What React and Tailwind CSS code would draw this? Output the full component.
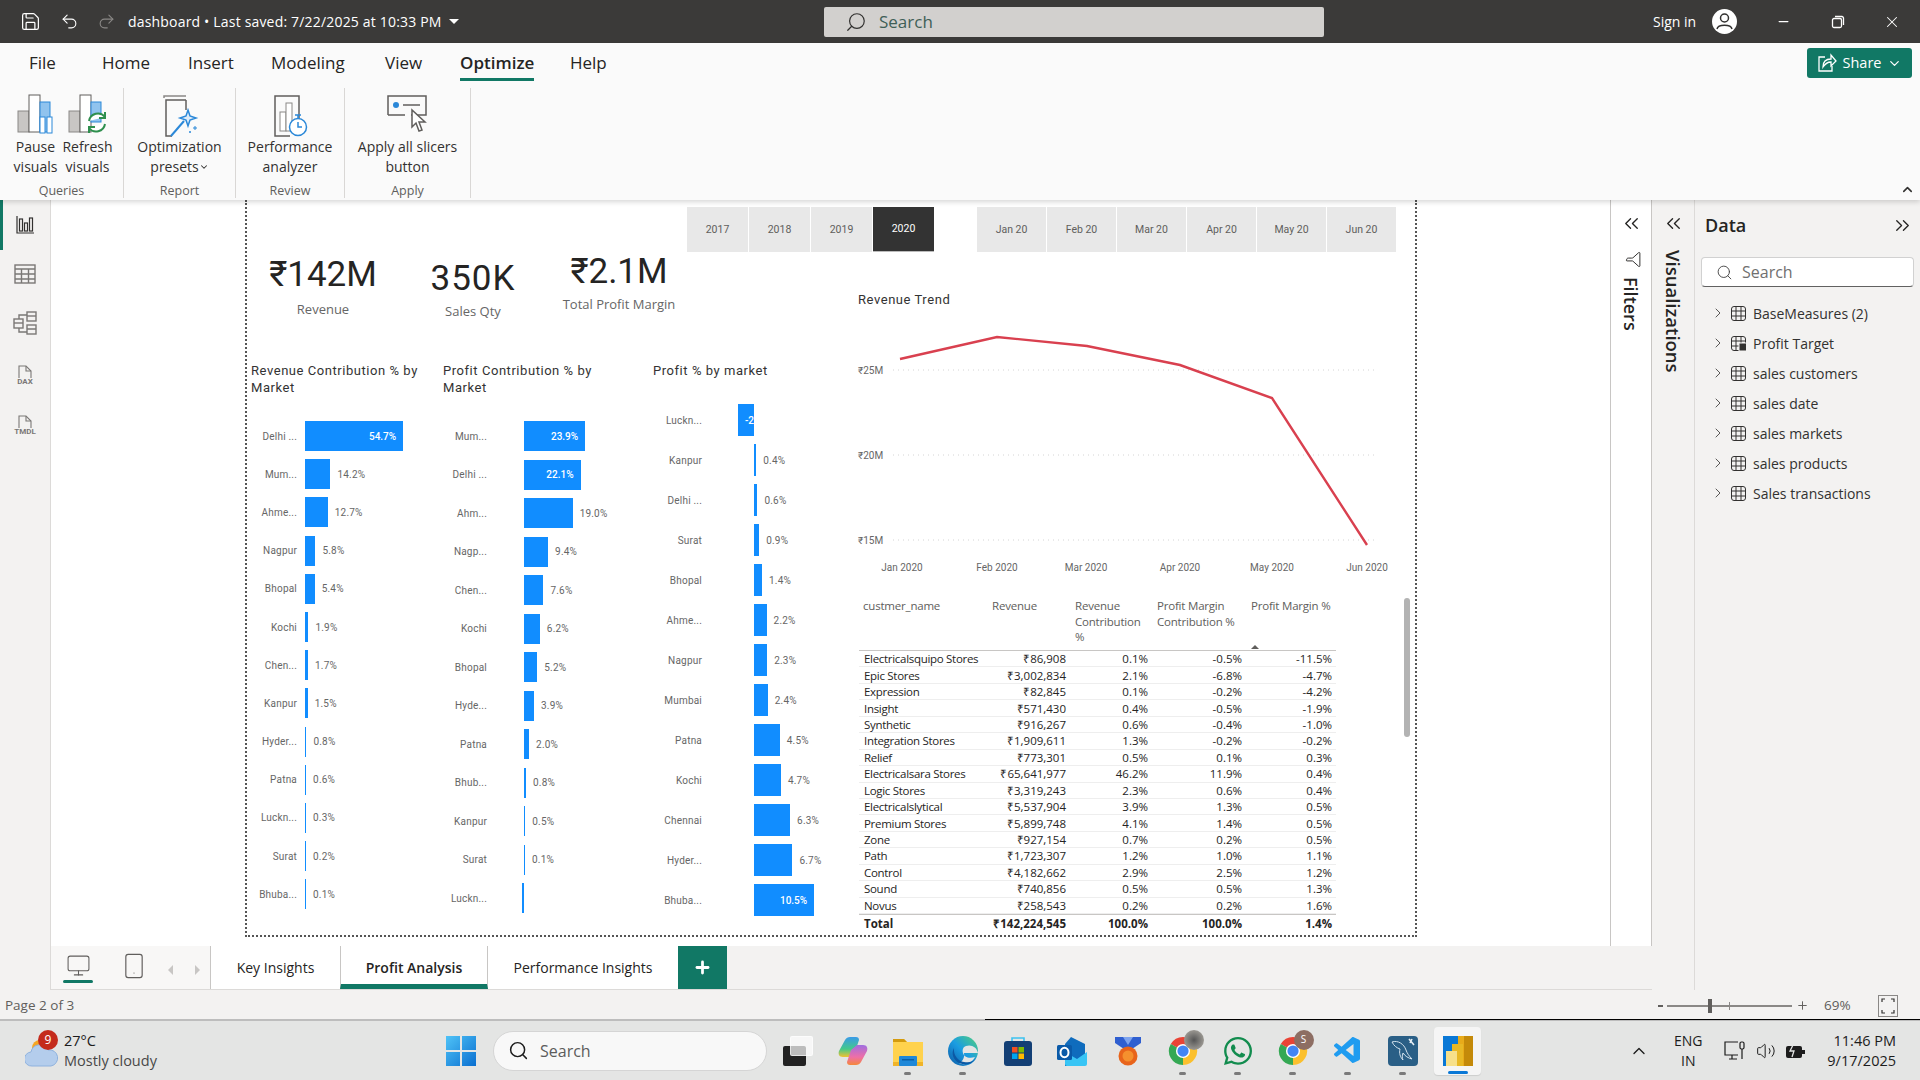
import React from "react";
import { Save, Undo2, Redo2, Search, Minus, X, ChevronDown, ChevronUp, ChevronRight, ChevronsLeft, ChevronsRight, Filter, Monitor, Smartphone, Plus, Volume2 } from "lucide-react";
import { FaWhatsapp } from "react-icons/fa";
import { VscVscode } from "react-icons/vsc";

const UI = "font-['Open_Sans',sans-serif]";
const DIN = "font-['Roboto',sans-serif]";

const revenueContribution = [
  ["Delhi ...", 54.7], ["Mum...", 14.2], ["Ahme...", 12.7], ["Nagpur", 5.8], ["Bhopal", 5.4], ["Kochi", 1.9], ["Chen...", 1.7],
  ["Kanpur", 1.5], ["Hyder...", 0.8], ["Patna", 0.6], ["Luckn...", 0.3], ["Surat", 0.2], ["Bhuba...", 0.1],
];
const profitContribution = [
  ["Mum...", 23.9], ["Delhi ...", 22.1], ["Ahm...", 19.0], ["Nagp...", 9.4], ["Chen...", 7.6], ["Kochi", 6.2], ["Bhopal", 5.2],
  ["Hyde...", 3.9], ["Patna", 2.0], ["Bhub...", 0.8], ["Kanpur", 0.5], ["Surat", 0.1], ["Luckn...", -0.6],
];
const profitByMarket = [
  ["Luckn...", -2.8], ["Kanpur", 0.4], ["Delhi ...", 0.6], ["Surat", 0.9], ["Bhopal", 1.4], ["Ahme...", 2.2], ["Nagpur", 2.3],
  ["Mumbai", 2.4], ["Patna", 4.5], ["Kochi", 4.7], ["Chennai", 6.3], ["Hyder...", 6.7], ["Bhuba...", 10.5],
];

const customers = [
  ["Electricalsquipo Stores", "₹86,908", "0.1%", "-0.5%", "-11.5%"],
  ["Epic Stores", "₹3,002,834", "2.1%", "-6.8%", "-4.7%"],
  ["Expression", "₹82,845", "0.1%", "-0.2%", "-4.2%"],
  ["Insight", "₹571,430", "0.4%", "-0.5%", "-1.9%"],
  ["Synthetic", "₹916,267", "0.6%", "-0.4%", "-1.0%"],
  ["Integration Stores", "₹1,909,611", "1.3%", "-0.2%", "-0.2%"],
  ["Relief", "₹773,301", "0.5%", "0.1%", "0.3%"],
  ["Electricalsara Stores", "₹65,641,977", "46.2%", "11.9%", "0.4%"],
  ["Logic Stores", "₹3,319,243", "2.3%", "0.6%", "0.4%"],
  ["Electricalslytical", "₹5,537,904", "3.9%", "1.3%", "0.5%"],
  ["Premium Stores", "₹5,899,748", "4.1%", "1.4%", "0.5%"],
  ["Zone", "₹927,154", "0.7%", "0.2%", "0.5%"],
  ["Path", "₹1,723,307", "1.2%", "1.0%", "1.1%"],
  ["Control", "₹4,182,662", "2.9%", "2.5%", "1.2%"],
  ["Sound", "₹740,856", "0.5%", "0.5%", "1.3%"],
  ["Novus", "₹258,543", "0.2%", "0.2%", "1.6%"],
];

const tables = ["BaseMeasures (2)", "Profit Target", "sales customers", "sales date", "sales markets", "sales products", "Sales transactions"];

const PauseIcon = () => (
  <svg width="40" height="40" viewBox="0 0 40 40" fill="none">
    <rect x="2" y="17" width="11" height="21" fill="#c8c6c4" stroke="#8a8886" />
    <rect x="13" y="1" width="11" height="37" fill="#fff" stroke="#605e5c" />
    <rect x="24" y="8" width="10" height="30" fill="#90c3ee" stroke="#2b88d8" />
    <rect x="24" y="23" width="5" height="16" fill="#fff" stroke="#2b88d8" />
    <rect x="31" y="23" width="5" height="16" fill="#fff" stroke="#2b88d8" />
  </svg>
);

const RefreshIcon = () => (
  <svg width="40" height="40" viewBox="0 0 40 40" fill="none">
    <rect x="1" y="17" width="11" height="21" fill="#c8c6c4" stroke="#8a8886" />
    <rect x="12" y="1" width="11" height="37" fill="#fff" stroke="#605e5c" />
    <rect x="23" y="8" width="10" height="20" fill="#90c3ee" stroke="#2b88d8" />
    <path d="M21 27a9 9 0 0 1 16-4M37 30a9 9 0 0 1-16 4" stroke="#2f8f4e" strokeWidth="2" fill="#fff" />
    <path d="M37 18v6h-6M21 39v-6h6" stroke="#2f8f4e" strokeWidth="2" />
  </svg>
);

const WandIcon = () => (
  <svg width="40" height="44" viewBox="0 0 40 44" fill="none">
    <path d="M27 2H5v2" stroke="#8a8886" strokeWidth="1.5" />
    <path d="M27 6H7v36h6" stroke="#605e5c" strokeWidth="1.5" />
    <path d="M27 6v10" stroke="#605e5c" strokeWidth="1.5" />
    <path d="M12 42l13-15" stroke="#2b88d8" strokeWidth="2" />
    <path d="M29 16l2 6 6 2-6 2-2 6-2-6-6-2 6-2z" fill="#deecf9" stroke="#2b88d8" strokeWidth="1.5" />
    <path d="M36 32v4M34 34h4M31 37v2M30 38h2" stroke="#2b88d8" />
  </svg>
);

const PerfIcon = () => (
  <svg width="40" height="44" viewBox="0 0 40 44" fill="none">
    <path d="M29 26V2H5v40h15" stroke="#605e5c" strokeWidth="1.5" />
    <rect x="10" y="18" width="6" height="19" fill="#fff" stroke="#8a8886" />
    <rect x="16" y="9" width="6" height="28" fill="#fff" stroke="#8a8886" />
    <circle cx="28" cy="33" r="8.5" fill="#fff" stroke="#2b88d8" strokeWidth="1.5" />
    <path d="M28 28v5h4M25 21h6M28 21v3" stroke="#2b88d8" strokeWidth="1.5" />
  </svg>
);

const SlicerIcon = () => (
  <svg width="42" height="44" viewBox="0 0 42 44" fill="none">
    <path d="M2 21V2h38v19H25M2 21h17" stroke="#605e5c" strokeWidth="1.5" />
    <circle cx="10" cy="11" r="3" fill="#2b88d8" />
    <path d="M17 11h17" stroke="#605e5c" strokeWidth="1.5" />
    <path d="M26 16v17l4-4 3 8 3-1-3-8h6z" fill="#fff" stroke="#605e5c" strokeWidth="1.5" />
  </svg>
);

const ShareIcon = () => (
  <svg width="20" height="20" viewBox="0 0 20 20" fill="none" stroke="#fff" strokeWidth="1.3">
    <path d="M8 4H2v14h13v-5" />
    <path d="M6 14c0-5 3-8 8-8V2l5 6-5 5V9c-4 0-6 2-8 5z" />
  </svg>
);

const RibbonButton = ({ icon, lines, caret, width = "" }) => (
  <div className={`flex flex-col items-center ${width}`}>
    <div className="flex h-[43px] items-start justify-center">{icon}</div>
    <div className="text-center text-[14px] leading-[20px] text-[#323130]">
      {lines.map((l, i) => (
        <div key={l} className="flex items-center justify-center whitespace-nowrap">
          {l}
          {caret && i === 1 && <ChevronDown size={10} strokeWidth={2.5} />}
        </div>
      ))}
    </div>
  </div>
);

const RibbonGroup = ({ width, label, children }) => (
  <div className={`flex h-[110px] flex-col border-r border-[#d9d7d5] ${width}`}>
    <div className="flex h-[95px] justify-center pt-[6px]">{children}</div>
    <div className="text-center text-[12.5px] leading-[15px] text-[#605e5c]">{label}</div>
  </div>
);

const ribbonTabs = [
  ["File", "w-[73px]"], ["Home", "w-[86px]"], ["Insert", "w-[83px]"], ["Modeling", "w-[114px]"], ["View", "w-[75px]"], ["Optimize", "w-[110px]"], ["Help", "w-[60px]"],
];

const TitleBar = () => (
  <div className="flex h-[43px] items-center bg-[#3b3a39] text-white">
    <Save size={21} strokeWidth={1.4} className="ml-[20px]" />
    <Undo2 size={19} strokeWidth={1.4} className="ml-[19px]" />
    <Redo2 size={19} strokeWidth={1.4} className="ml-[18px] text-[#8a8886]" />
    <div className="ml-[12px] w-[314px] whitespace-nowrap text-[14px] tracking-[0.18px]">dashboard • Last saved: 7/22/2025 at 10:33 PM</div>
    <div className="ml-[7px] h-0 w-0 border-x-[5px] border-t-[5px] border-x-transparent border-t-white" />
    <div className="ml-[365px] flex h-[30px] w-[500px] items-center rounded-[2px] bg-[#d2d0ce] pl-[21px] text-[17px] text-[#3f5f57]">
      <Search size={22} strokeWidth={1.3} className="-scale-x-100 text-[#323130]" />
      <span className="ml-[12px]">Search</span>
    </div>
    <div className="ml-[329px] text-[14px]">Sign in</div>
    <svg width="27" height="27" viewBox="0 0 27 27" className="ml-[15px]">
      <circle cx="13.5" cy="13.5" r="12.5" fill="#fff" />
      <circle cx="13.5" cy="10" r="4" fill="none" stroke="#323130" strokeWidth="1.5" />
      <path d="M6 21c1-5 14-5 15 0" fill="none" stroke="#323130" strokeWidth="1.5" />
    </svg>
    <Minus size={15} className="ml-[38px]" />
    <svg width="14" height="14" viewBox="0 0 14 14" fill="none" stroke="#fff" strokeWidth="1.3" className="ml-[40px]">
      <rect x="1.5" y="3.5" width="9" height="9" rx="1.5" />
      <path d="M4 1.5h7a2 2 0 0 1 1.5 1.5v7" />
    </svg>
    <X size={18} strokeWidth={1.4} className="ml-[38px]" />
  </div>
);

const Ribbon = () => (
  <div className="relative z-10 h-[157px] bg-[#fafafa] shadow-[0_2px_5px_rgba(0,0,0,0.16)]">
    <div className="flex h-[38px] pl-[29px] text-[17px] text-[#252423]">
      {ribbonTabs.map(([t, w]) => (
        <div key={t} className={w}>
          <div className="flex w-fit flex-col">
            <div className={`mt-[8px] leading-[24px] ${t === "Optimize" ? "font-semibold" : ""}`}>{t}</div>
            {t === "Optimize" && <div className="mt-[3px] h-[3px] bg-[#117865]" />}
          </div>
        </div>
      ))}
    </div>
    <div className="mt-[7px] flex">
      <RibbonGroup width="w-[124px]" label="Queries">
        <RibbonButton icon={<PauseIcon />} lines={["Pause", "visuals"]} width="w-[52px]" />
        <RibbonButton icon={<RefreshIcon />} lines={["Refresh", "visuals"]} width="w-[52px]" />
      </RibbonGroup>
      <RibbonGroup width="w-[112px]" label="Report">
        <RibbonButton icon={<WandIcon />} lines={["Optimization", "presets"]} caret />
      </RibbonGroup>
      <RibbonGroup width="w-[109px]" label="Review">
        <RibbonButton icon={<PerfIcon />} lines={["Performance", "analyzer"]} />
      </RibbonGroup>
      <RibbonGroup width="w-[126px]" label="Apply">
        <RibbonButton icon={<SlicerIcon />} lines={["Apply all slicers", "button"]} />
      </RibbonGroup>
    </div>
    <div className="absolute right-[8px] top-[5px] flex h-[30px] w-[105px] items-center justify-center gap-[6px] rounded-[3px] bg-[#117865] text-[14.5px] text-white">
      <ShareIcon />
      <span>Share</span>
      <ChevronDown size={15} />
    </div>
    <ChevronUp size={15} strokeWidth={2.5} className="absolute bottom-[3px] right-[5px] text-[#323130]" />
  </div>
);

const ReportRail = () => (
  <svg width="18" height="18" viewBox="0 0 18 18" fill="none" stroke="#323130" strokeWidth="1.2">
    <path d="M1 0v17h17" />
    <rect x="3.5" y="3" width="3" height="12" />
    <rect x="8.5" y="7" width="3" height="8" />
    <rect x="13.5" y="2" width="3" height="13" />
  </svg>
);
const TableRail = () => (
  <svg width="22" height="20" viewBox="0 0 22 20" fill="none" stroke="#7a7876" strokeWidth="1.4">
    <rect x="1" y="1" width="20" height="18" />
    <path d="M1 5h20M1 10h20M1 15h20M7.5 5v14M14.5 5v14" />
  </svg>
);
const ModelRail = () => (
  <svg width="24" height="24" viewBox="0 0 24 24" fill="none" stroke="#7a7876" strokeWidth="1.4">
    <rect x="1" y="8" width="9" height="9" />
    <path d="M1 12h9" />
    <rect x="14" y="1" width="9" height="9" />
    <path d="M14 5h9" />
    <rect x="14" y="14" width="9" height="9" />
    <path d="M14 18h9M6 8V4h8M6 17v4h8" />
  </svg>
);
const DocRail = ({ label, size }) => (
  <svg width="26" height="22" viewBox="0 0 26 22" fill="none" className="mt-[4px]">
    <path d="M7 14V2h7l5 5v7" stroke="#7a7876" strokeWidth="1.1" />
    <path d="M14 2v5h5" stroke="#7a7876" strokeWidth="1.1" />
    <text x="13" y="20" textAnchor="middle" fontSize={size} fontWeight="700" fill="#7a7876" fontFamily="Roboto, sans-serif">{label}</text>
  </svg>
);

const railSlots = [
  ["h-[50px]", <ReportRail />, true],
  ["h-[48px]", <TableRail />, false],
  ["h-[50px]", <ModelRail />, false],
  ["h-[50px]", <DocRail label="DAX" size="8" />, false],
  ["h-[50px]", <DocRail label="TMDL" size="8" />, false],
];

const LeftRail = () => (
  <div className="w-[51px] shrink-0 border-r border-[#dcdad8] bg-[#f3f2f1]">
    {railSlots.map(([h, icon, active], i) => (
      <div key={i} className={`flex items-center justify-center ${h} ${active ? "border-l-[3px] border-[#117865] pr-[3px]" : ""}`}>
        {icon}
      </div>
    ))}
  </div>
);

const Slicer = ({ label, active, width }) => (
  <div className={`flex h-[45px] items-center justify-center text-[10.5px] ${width} ${active ? "border-b border-[#bbb] bg-[#333333] text-white" : "bg-[#e8e8e8] text-[#605e5c]"} ${DIN}`}>
    {label}
  </div>
);

const Kpi = ({ value, label, width, top, gap, spacing }) => (
  <div className={`flex flex-col items-center ${width} ${top}`}>
    <div className={`text-[35px] leading-[38px] text-[#252423] ${spacing} ${DIN}`}>{value}</div>
    <div className={`text-[13px] leading-[20px] text-[#666666] ${gap}`}>{label}</div>
  </div>
);

const BarChart = ({ title, rows, width, titlePad, rowsGap, labelW, gapW, scale, pitch, barH, insideFrom }) => (
  <div className={`${width} pt-[2px]`}>
    <div className={`h-[34px] text-[13px] leading-[17px] tracking-[0.55px] text-[#333333] ${titlePad} ${DIN}`}>{title}</div>
    <div className={rowsGap}>
      {rows.map(([name, v]) => {
        const w = Math.max(Math.abs(v) * scale, 1);
        const inside = v >= insideFrom;
        return (
          <div key={name} className={`flex items-center ${pitch} text-[10px] text-[#666666] ${DIN}`}>
            <div className={`shrink-0 whitespace-nowrap text-right tracking-[0.2px] ${labelW}`}>{name}</div>
            <div className={`flex shrink-0 justify-end ${gapW}`}>
              {v < 0 && (
                <div className={`flex items-center overflow-hidden whitespace-nowrap bg-[#118dff] font-medium text-white ${barH} ${w > 10 ? "pl-[7px]" : ""}`} style={{ width: w }}>
                  {w > 10 && `${v}%`}
                </div>
              )}
            </div>
            {v > 0 && (
              <div className={`flex shrink-0 items-center justify-end bg-[#118dff] font-medium text-white ${barH} ${inside ? "pr-[7px]" : ""}`} style={{ width: w }}>
                {inside && `${v.toFixed(1)}%`}
              </div>
            )}
            {v > 0 && !inside && <div className="ml-[7px] tracking-[0.2px]">{v.toFixed(1)}%</div>}
          </div>
        );
      })}
    </div>
  </div>
);

const linePoints = "50,49 147,27 237,36 330,55 422,88 517,235";
const xTicks = [["Jan 2020", 52], ["Feb 2020", 147], ["Mar 2020", 236], ["Apr 2020", 330], ["May 2020", 422], ["Jun 2020", 517]];
const yTicks = [["₹25M", 60], ["₹20M", 145], ["₹15M", 230]];

const TrendChart = () => (
  <svg width="560" height="270" viewBox="0 0 560 270" fontFamily="Roboto, sans-serif" fontSize="10" fill="#666666">
    {yTicks.map(([t, y]) => (
      <g key={t}>
        <text x="8" y={y + 3.5}>{t}</text>
        <line x1="43" x2="525" y1={y} y2={y} stroke="#d4d4d4" strokeDasharray="1 4" />
      </g>
    ))}
    {xTicks.map(([t, x]) => (
      <text key={t} x={x} y="261" textAnchor="middle">{t}</text>
    ))}
    <polyline points={linePoints} fill="none" stroke="#d9404f" strokeWidth="2.4" />
  </svg>
);

const tableCols = "grid grid-cols-[126px_85px_82px_94px_90px]";

const CustomerTable = () => (
  <div className="relative ml-[9px] mt-[18px] w-[551px] text-[11.5px] text-[#252423]">
    <div className={`${tableCols} h-[53px] w-[477px] border-b border-[#c8c6c4] leading-[15.5px] tracking-[-0.2px] text-[#605e5c]`}>
      <div className="pl-[4px]">custmer_name</div>
      <div className="pl-[7px]">Revenue</div>
      <div className="pl-[5px]">Revenue Contribution %</div>
      <div className="pl-[5px]">Profit Margin Contribution %</div>
      <div className="relative whitespace-nowrap pl-[5px]">
        Profit Margin %
        <div className="absolute bottom-[1px] left-[5px] h-0 w-0 border-x-[4px] border-b-[4px] border-x-transparent border-b-[#605e5c]" />
      </div>
    </div>
    {customers.map((row) => (
      <div key={row[0]} className={`${tableCols} h-[16.45px] w-[477px] items-center border-b border-[#eeeeee] leading-[15px]`}>
        <div className="whitespace-nowrap pl-[5px] tracking-[-0.3px]">{row[0]}</div>
        {row.slice(1).map((c, i) => (
          <div key={i} className="pr-[4px] text-right">{c}</div>
        ))}
      </div>
    ))}
    <div className={`${tableCols} h-[19px] w-[477px] items-center border-t border-[#c8c6c4] font-bold`}>
      <div className="pl-[5px]">Total</div>
      <div className="pr-[4px] text-right">₹142,224,545</div>
      <div className="pr-[4px] text-right">100.0%</div>
      <div className="pr-[4px] text-right">100.0%</div>
      <div className="pr-[4px] text-right">1.4%</div>
    </div>
    <div className="absolute left-[545px] top-0 h-[139px] w-[6px] rounded-full bg-[#b3b3b3]" />
  </div>
);

const Report = () => (
  <div className={`ml-[194px] h-[737px] w-[1172px] border-x-2 border-b-2 border-dotted border-[#555555] ${UI}`}>
    <div className="flex h-[52px] pl-[440px] pt-[7px]">
      <div className="flex gap-px">
        {["2017", "2018", "2019", "2020"].map((y) => (
          <Slicer key={y} label={y} width="w-[61px]" active={y === "2020"} />
        ))}
      </div>
      <div className="ml-[43px] flex gap-px">
        {["Jan 20", "Feb 20", "Mar 20", "Apr 20", "May 20", "Jun 20"].map((m) => (
          <Slicer key={m} label={m} width="w-[69px]" />
        ))}
      </div>
    </div>
    <div className="-mt-px flex">
      <div className="w-[603px] shrink-0">
        <div className="flex h-[109px]">
          <Kpi value="₹142M" label="Revenue" width="w-[152px]" top="pt-[5px]" gap="mt-[5px]" spacing="tracking-[0px]" />
          <Kpi value="350K" label="Sales Qty" width="w-[148px]" top="pt-[9px]" gap="mt-[3px]" spacing="tracking-[1px]" />
          <Kpi value="₹2.1M" label="Total Profit Margin" width="w-[144px]" top="pt-[2px]" gap="mt-[3px]" spacing="tracking-[0px]" />
        </div>
        <div className="flex">
          <BarChart title="Revenue Contribution % by Market" rows={revenueContribution} width="w-[190px]" titlePad="pl-[4px]" rowsGap="mt-[21px]" labelW="w-[50px]" gapW="w-[8px]" scale={1.795} pitch="h-[38.2px]" barH="h-[30px]" insideFrom={50} />
          <BarChart title="Profit Contribution % by Market" rows={profitContribution} width="w-[210px]" titlePad="pl-[6px] pr-[20px]" rowsGap="mt-[21px]" labelW="w-[50px]" gapW="w-[37px]" scale={2.56} pitch="h-[38.5px]" barH="h-[30px]" insideFrom={20} />
          <BarChart title="Profit % by market" rows={profitByMarket} width="w-[203px]" titlePad="pl-[6px]" rowsGap="mt-[4px]" labelW="w-[55px]" gapW="w-[52px]" scale={5.73} pitch="h-[40px]" barH="h-[32px]" insideFrom={10} />
        </div>
      </div>
      <div className="flex-1">
        <div className={`ml-[8px] mt-[40px] h-[19px] text-[13px] leading-[17px] tracking-[0.55px] text-[#333333] ${DIN}`}>Revenue Trend</div>
        <TrendChart />
        <CustomerTable />
      </div>
    </div>
  </div>
);

const FiltersPane = () => (
  <div className="flex w-[42px] shrink-0 flex-col items-center border-x border-[#c8c6c4] bg-white pt-[12px]">
    <ChevronsLeft size={23} strokeWidth={1.4} className="text-[#252423]" />
    <Filter size={17} strokeWidth={1.4} className="mt-[16px] ml-[5px] rotate-90 text-[#323130]" />
    <div className="mt-[9px] text-[18px] font-semibold leading-none text-[#252423] [writing-mode:vertical-rl]">Filters</div>
  </div>
);

const VizPane = () => (
  <div className="flex w-[43px] shrink-0 flex-col items-center border-r border-[#dcdad8] bg-[#f3f2f1] pt-[12px]">
    <ChevronsLeft size={23} strokeWidth={1.4} className="text-[#252423]" />
    <div className="mt-[15px] text-[18.5px] font-semibold leading-none text-[#252423] [writing-mode:vertical-rl]">Visualizations</div>
  </div>
);

const TableGlyph = ({ calc }) => (
  <svg width="15" height="15" viewBox="0 0 15 15" fill="none" stroke="#323130" strokeWidth="1">
    <rect x="0.5" y="0.5" width="14" height="14" rx="2.5" />
    <path d="M0.5 5h14M0.5 10h14M5 0.5v14M10 0.5v14" />
    {calc && <rect x="8" y="7" width="7.5" height="8" fill="#323130" stroke="#f3f2f1" />}
  </svg>
);

const DataPane = () => (
  <div className="flex-1 bg-[#f3f2f1] pl-[6px] pr-[6px]">
    <div className="flex h-[48px] items-center pl-[4px] pt-[2px]">
      <span className="text-[18px] font-semibold text-[#252423]">Data</span>
      <ChevronsRight size={23} strokeWidth={1.4} className="ml-auto text-[#252423]" />
    </div>
    <div className="mt-[9px] flex h-[30px] items-center rounded-[4px] border border-[#d1d1d1] border-b-[#616161] bg-white pl-[14px] text-[16px] text-[#707070]">
      <Search size={17} strokeWidth={1.3} className="text-[#424242]" />
      <span className="ml-[9px]">Search</span>
    </div>
    <div className="mt-[11px] pl-[9px]">
      {tables.map((t) => (
        <div key={t} className="flex h-[30px] items-center text-[14px] text-[#323130]">
          <ChevronRight size={16} strokeWidth={1.2} className="text-[#323130]" />
          <div className="ml-[5px] mr-[7px] flex"><TableGlyph calc={t === "Profit Target"} /></div>
          <span>{t}</span>
        </div>
      ))}
    </div>
  </div>
);

const PageTabs = () => (
  <div className="flex h-[44px] border-b border-[#dcdad8] bg-[#f3f2f1] text-[14px] text-[#252423]">
    <div className="flex w-[159px] items-start bg-[#f8f7f6]">
      <div className="ml-[12px] flex w-[30px] flex-col items-center pt-[7px]">
        <Monitor size={25} strokeWidth={1} className="text-[#605e5c]" />
        <div className="mt-[2px] h-[3px] w-[30px] rounded-sm bg-[#117865]" />
      </div>
      <Smartphone size={28} strokeWidth={1} className="ml-[27px] mt-[6px] text-[#605e5c]" />
      <div className="ml-[20px] mt-[19px] h-0 w-0 border-y-[5px] border-r-[5px] border-y-transparent border-r-[#c8c6c4]" />
      <div className="ml-[22px] mt-[19px] h-0 w-0 border-y-[5px] border-l-[5px] border-y-transparent border-l-[#c8c6c4]" />
    </div>
    <div className="flex w-[130px] items-center justify-center border-l border-[#c8c6c4] bg-white">Key Insights</div>
    <div className="flex w-[148px] items-center justify-center border-x border-[#c8c6c4] border-b-[5px] border-b-[#117865] bg-white pt-[5px] font-semibold">Profit Analysis</div>
    <div className="flex w-[190px] items-center justify-center bg-white">Performance Insights</div>
    <div className="flex w-[49px] items-center justify-center bg-[#117865] text-white">
      <Plus size={19} strokeWidth={3.5} />
    </div>
  </div>
);

const StatusBar = () => (
  <div className="flex h-[29px] items-center bg-[#f3f2f1] pl-[5px] pt-[2px] text-[13.5px] text-[#605e5c]">
    <span>Page 2 of 3</span>
    <div className="ml-auto flex items-center pr-[22px]">
      <div className="h-[2px] w-[5px] bg-[#605e5c]" />
      <div className="relative ml-[4px] h-[2px] w-[125px] bg-[#8a8886]">
        <div className="absolute left-[41px] top-[-6px] h-[14px] w-[4px] bg-[#605e5c]" />
        <div className="absolute left-[62px] top-[-3px] h-[8px] w-px bg-[#8a8886]" />
      </div>
      <Plus size={13} strokeWidth={1.8} className="ml-[4px] text-[#605e5c]" />
      <span className="ml-[15px] w-[46px] text-[#605e5c]">69%</span>
      <svg width="20" height="22" viewBox="0 0 20 22" fill="none" className="ml-[8px]">
        <rect x="0.5" y="0.5" width="19" height="21" fill="#f3f2f1" stroke="#8a8886" />
        <path d="M7 4H4v3M13 4h3v3M7 18H4v-3M13 18h3v-3" stroke="#323130" strokeWidth="1.2" />
      </svg>
    </div>
  </div>
);

const Chrome = ({ badge }) => (
  <div className="relative">
    <svg width="30" height="30" viewBox="0 0 32 32">
      <path d="M16 16L3 8.5A15 15 0 0 1 29 8.5Z" fill="#e94335" />
      <path d="M16 16L29 8.5A15 15 0 0 1 16 31Z" fill="#fbc02d" />
      <path d="M16 16L16 31A15 15 0 0 1 3 8.5Z" fill="#34a853" />
      <circle cx="16" cy="16" r="7.5" fill="#fff" />
      <circle cx="16" cy="16" r="6" fill="#4285f4" />
    </svg>
    {badge}
  </div>
);

const TaskIcons = {
  view: (
    <div className="relative h-[30px] w-[30px]">
      <div className="absolute bottom-0 left-0 h-[20px] w-[23px] rounded-[2px] bg-[#222222]" />
      <div className="absolute right-0 top-0 h-[20px] w-[23px] rounded-[2px] border border-white/60 bg-white/70" />
    </div>
  ),
  copilot: (
    <svg width="30" height="30" viewBox="0 0 30 30">
      <defs>
        <linearGradient id="copA" x1="0" y1="0" x2="0" y2="1"><stop offset="0" stopColor="#3a9be8" /><stop offset="0.6" stopColor="#45c98a" /><stop offset="1" stopColor="#f2c230" /></linearGradient>
        <linearGradient id="copB" x1="0" y1="0" x2="0" y2="1"><stop offset="0" stopColor="#a06ee0" /><stop offset="0.6" stopColor="#ee6fa8" /><stop offset="1" stopColor="#f5883a" /></linearGradient>
      </defs>
      <path d="M12 1h6c2 0 3 1 3 3l-4 12-6 5H5C1 21 0 18 1 15l6-11c1-2 3-3 5-3z" fill="url(#copA)" />
      <path d="M18 29h-6c-2 0-3-1-3-3l4-12 6-5h6c4 0 5 3 4 6l-6 11c-1 2-3 3-5 3z" fill="url(#copB)" />
    </svg>
  ),
  files: (
    <svg width="30" height="30" viewBox="0 0 30 30">
      <path d="M0 3h11l3 3h16v24H0z" fill="#ffd24d" />
      <path d="M0 3h11l3 3H0z" fill="#d49b0f" />
      <path d="M0 26h30v4H0z" fill="#f0b429" />
      <rect x="6" y="20" width="18" height="10" rx="1" fill="#1f88d8" />
      <rect x="9" y="23" width="12" height="1.5" fill="#0b5fa5" />
    </svg>
  ),
  edge: (
    <svg width="30" height="30" viewBox="0 0 30 30">
      <defs>
        <linearGradient id="edgeG" x1="0" y1="1" x2="1" y2="0"><stop offset="0" stopColor="#0c59a4" /><stop offset="0.5" stopColor="#1b9de2" /><stop offset="1" stopColor="#52d17a" /></linearGradient>
      </defs>
      <circle cx="15" cy="15" r="15" fill="url(#edgeG)" />
      <path d="M30 17c-1-6-7-9-12-7-3 1-4 4-3 7 1 4 6 6 12 4-3 6-10 9-16 6 3-1 6-5 5-10" fill="#e4e5e5" />
      <path d="M11 27c-6-3-8-10-5-15-1 7 4 13 10 14 5 1 9 0 12-4-3 6-10 8-17 5z" fill="#0c59a4" />
    </svg>
  ),
  store: (
    <svg width="30" height="30" viewBox="0 0 30 30">
      <path d="M9 6V2h12v4" fill="none" stroke="#3cc2f0" strokeWidth="1.6" />
      <rect x="1" y="5" width="28" height="25" rx="3" fill="#133f75" />
      <rect x="9" y="11" width="5.5" height="5.5" fill="#f25022" />
      <rect x="15.5" y="11" width="5.5" height="5.5" fill="#7fba00" />
      <rect x="9" y="17.5" width="5.5" height="5.5" fill="#00a4ef" />
      <rect x="15.5" y="17.5" width="5.5" height="5.5" fill="#ffb900" />
    </svg>
  ),
  outlook: (
    <svg width="32" height="30" viewBox="0 0 32 30">
      <path d="M14 1l14 7v22H8V8z" fill="#0f6cbd" />
      <path d="M8 16l12 7 10-7v12a2 2 0 0 1-2 2H10a2 2 0 0 1-2-2z" fill="#38c5f5" />
      <rect x="0" y="9" width="15" height="15" rx="1.5" fill="#0a5aa8" />
      <ellipse cx="7.5" cy="16.5" rx="4" ry="4.8" fill="none" stroke="#fff" strokeWidth="2" />
    </svg>
  ),
  medal: (
    <svg width="28" height="30" viewBox="0 0 28 30">
      <path d="M1 1h26v6l-9 6h-8L1 7z" fill="#2f5fd0" />
      <path d="M9 1h10l-5 8z" fill="#7ea4ee" />
      <circle cx="14" cy="20" r="9.5" fill="#e8641b" />
      <circle cx="14" cy="20" r="5.5" fill="#f5902e" />
    </svg>
  ),
  chrome1: <Chrome badge={<div className="absolute right-[-6px] top-[-6px] h-[20px] w-[20px] rounded-full bg-[radial-gradient(circle,#555555,#b8b4ac)]" />} />,
  whatsapp: <FaWhatsapp size={32} className="text-[#128c4e]" />,
  chrome2: <Chrome badge={<div className={`absolute right-[-6px] top-[-6px] flex h-[20px] w-[20px] items-center justify-center rounded-full bg-[#8d6e63] text-[10px] text-white ${UI}`}>S</div>} />,
  vscode: <VscVscode size={32} className="text-[#1f9cf0]" />,
  mysql: (
    <svg width="30" height="30" viewBox="0 0 30 30" fill="none">
      <rect width="30" height="30" rx="4" fill="#2a5f86" />
      <path d="M4 6c6-2 12 2 14 8 1 3 3 6 6 9-4-1-7-3-9-6-1 3-1 5 0 7-3-3-4-7-3-11-3-1-6-3-8-7z" stroke="#d4e3ee" strokeWidth="1" />
      <path d="M21 3l5 6M24 3l-2 4" stroke="#e6eef4" strokeWidth="1.6" />
    </svg>
  ),
  pbi: (
    <svg width="30" height="30" viewBox="0 0 30 30">
      <rect width="30" height="30" fill="#0a78d6" />
      <rect x="20" y="0" width="10" height="30" fill="#c48a0a" />
      <rect x="15" y="0" width="6" height="30" fill="#e8ab1a" />
      <rect x="9" y="8" width="11" height="22" fill="#e8b825" />
      <rect x="3" y="15" width="11" height="15" fill="#f7e08a" />
    </svg>
  ),
};

const taskbarSlots = [
  ["view", false], ["copilot", false], ["files", true], ["edge", true], ["store", false], ["outlook", false], ["medal", false],
  ["chrome1", true], ["whatsapp", true], ["chrome2", true], ["vscode", true], ["mysql", true],
];

const TaskSlot = ({ name, running }) => (
  <div className="flex h-[60px] w-[55px] flex-col items-center pt-[15px]">
    <div className="flex h-[30px] items-center justify-center">{TaskIcons[name]}</div>
    {running && <div className="mt-[6px] h-[3px] w-[7px] rounded-full bg-[#7a7a7a]" />}
  </div>
);

const Taskbar = () => (
  <div className={`flex h-[60px] items-center border-t border-[#bdbdbd] bg-[#e4e5e4] text-[#1c1c1c] ${UI}`}>
    <div className="relative flex w-[440px] shrink-0 items-center pl-[25px]">
      <svg width="33" height="34" viewBox="0 0 33 34">
        <circle cx="15" cy="14" r="8" fill="#f5a623" />
        <path d="M7 32a7 7 0 0 1-1-14 9 9 0 0 1 17-2 8 8 0 0 1 3 16z" fill="#b4cdec" stroke="#8fb2de" />
      </svg>
      <div className="absolute left-[38px] top-[-1px] flex h-[20px] w-[20px] items-center justify-center rounded-full bg-[#c42b1c] text-[12px] text-white">9</div>
      <div className="ml-[6px] text-[14.5px] leading-[20px]">
        <div>27°C</div>
        <div className="text-[#484848]">Mostly cloudy</div>
      </div>
    </div>
    <svg width="30" height="30" viewBox="0 0 30 30" className="ml-[6px]">
      <defs>
        <linearGradient id="win" x1="0" y1="0" x2="1" y2="1"><stop offset="0" stopColor="#4fc3f7" /><stop offset="1" stopColor="#0a6fd0" /></linearGradient>
      </defs>
      <path d="M0 0h14v14H0zM16 0h14v14H16zM0 16h14v14H0zM16 16h14v14H16z" fill="url(#win)" />
    </svg>
    <div className="ml-[17px] flex h-[40px] w-[274px] shrink-0 items-center rounded-full border border-[#d5d5d5] bg-[#f8f8f8] pl-[14px] text-[16px] text-[#5c5c5c]">
      <Search size={21} strokeWidth={1.7} className="text-[#1c1c1c]" />
      <span className="ml-[11px]">Search</span>
    </div>
    <div className="ml-[3px] flex">
      {taskbarSlots.map(([n, r]) => (
        <TaskSlot key={n} name={n} running={r} />
      ))}
      <div className="ml-[4px] mt-[6px] flex h-[48px] w-[47px] flex-col items-center rounded-[4px] bg-[#f5f5f5] pt-[9px] shadow-[0_1px_1px_rgba(0,0,0,0.1)]">
        {TaskIcons.pbi}
        <div className="mt-[5px] h-[3px] w-[20px] rounded-full bg-[#0a78d6]" />
      </div>
    </div>
    <ChevronUp size={20} strokeWidth={1.6} className="ml-[148px]" />
    <div className="ml-[25px] text-center text-[14px] leading-[20px]">
      <div>ENG</div>
      <div>IN</div>
    </div>
    <svg width="22" height="22" viewBox="0 0 22 22" fill="none" stroke="#1c1c1c" strokeWidth="1.2" className="ml-[21px]">
      <path d="M14 2H1v13h13M5 19h8M8 15v4" />
      <rect x="16" y="2" width="4" height="7" rx="1.5" />
      <path d="M18 9v10" />
    </svg>
    <Volume2 size={20} strokeWidth={1.2} className="ml-[10px]" />
    <svg width="22" height="18" viewBox="0 0 22 18" className="ml-[9px]">
      <rect x="1" y="4" width="16" height="12" rx="2" fill="#1c1c1c" />
      <rect x="17" y="8" width="3" height="4" fill="#1c1c1c" />
      <path d="M9 1l-4 8h4l-2 6" fill="none" stroke="#e4e5e4" strokeWidth="1.3" />
    </svg>
    <div className="ml-auto pr-[24px] text-right text-[14.5px] leading-[20px]">
      <div>11:46 PM</div>
      <div>9/17/2025</div>
    </div>
  </div>
);

export default function App() {
  return (
    <div className={`flex h-[1080px] w-[1920px] flex-col overflow-hidden bg-[#f3f2f1] ${UI}`}>
      <TitleBar />
      <Ribbon />
      <div className="flex h-[790px]">
        <LeftRail />
        <div className="flex w-[1601px] shrink-0 flex-col">
          <div className="flex h-[746px]">
            <div className="w-[1559px] shrink-0 overflow-hidden bg-white">
              <Report />
            </div>
            <FiltersPane />
          </div>
          <PageTabs />
        </div>
        <VizPane />
        <DataPane />
      </div>
      <StatusBar />
      <div className="flex h-px">
        <div className="w-[985px] bg-[#bdbdbd]" />
        <div className="flex-1 bg-black" />
      </div>
      <Taskbar />
    </div>
  );
}
